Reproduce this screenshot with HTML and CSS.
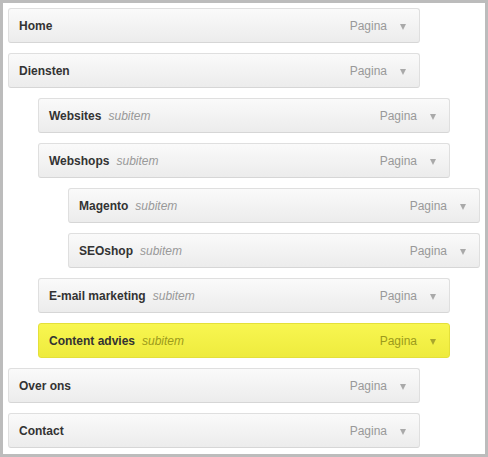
FILE: index.html
```html
<!DOCTYPE html>
<html>
<head>
<meta charset="utf-8">
<link rel="stylesheet" href="styles.css">
</head>
<body>
<div class="frame">
  <ul class="menu">
    <li class="item depth-0"><span class="title">Home</span><span class="type">Pagina</span><span class="arrow"></span></li>
    <li class="item depth-0"><span class="title">Diensten</span><span class="type">Pagina</span><span class="arrow"></span></li>
    <li class="item depth-1"><span class="title">Websites</span><span class="sub">subitem</span><span class="type">Pagina</span><span class="arrow"></span></li>
    <li class="item depth-1"><span class="title">Webshops</span><span class="sub">subitem</span><span class="type">Pagina</span><span class="arrow"></span></li>
    <li class="item depth-2"><span class="title">Magento</span><span class="sub">subitem</span><span class="type">Pagina</span><span class="arrow"></span></li>
    <li class="item depth-2"><span class="title">SEOshop</span><span class="sub">subitem</span><span class="type">Pagina</span><span class="arrow"></span></li>
    <li class="item depth-1"><span class="title">E-mail marketing</span><span class="sub">subitem</span><span class="type">Pagina</span><span class="arrow"></span></li>
    <li class="item depth-1 active"><span class="title">Content advies</span><span class="sub">subitem</span><span class="type">Pagina</span><span class="arrow"></span></li>
    <li class="item depth-0"><span class="title">Over ons</span><span class="type">Pagina</span><span class="arrow"></span></li>
    <li class="item depth-0"><span class="title">Contact</span><span class="type">Pagina</span><span class="arrow"></span></li>
  </ul>
</div>
</body>
</html>
```
FILE: styles.css
```css
html, body {
  margin: 0;
  padding: 0;
  background: #fff;
}
body {
  font-family: "Liberation Sans", Arial, sans-serif;
  font-size: 12px;
}
.frame {
  box-sizing: border-box;
  width: 488px;
  height: 457px;
  border: 3px solid #bcbcbc;
  padding: 5px;
  background: #fff;
}
.menu {
  list-style: none;
  margin: 0;
  padding: 0;
  display: flex;
  flex-direction: column;
  gap: 10px;
}
.item {
  box-sizing: border-box;
  width: 412px;
  height: 35px;
  display: flex;
  align-items: center;
  padding: 2px 13px 0 10px;
  border: 1px solid #dfdfdf;
  border-bottom-color: #d6d6d6;
  border-radius: 3px;
  background: linear-gradient(to bottom, #fafafa, #ececec);
  line-height: 15px;
}
.depth-1 { margin-left: 30px; }
.depth-2 { margin-left: 60px; }
.title {
  font-weight: bold;
  color: #333;
}
.sub {
  font-style: italic;
  color: #999;
  margin-left: 7px;
}
.type {
  margin-left: auto;
  color: #999;
}
.arrow {
  width: 0;
  height: 0;
  margin-left: 13px;
  border-left: 3.5px solid transparent;
  border-right: 3.5px solid transparent;
  border-top: 6px solid #a9a9a9;
}
.active {
  background: linear-gradient(to bottom, #f8f650, #eeeb3e);
  border-color: #e4e03a;
}
.active .sub,
.active .type {
  color: #9c9a1c;
}
.active .arrow {
  border-top-color: #a9a62c;
}
```
